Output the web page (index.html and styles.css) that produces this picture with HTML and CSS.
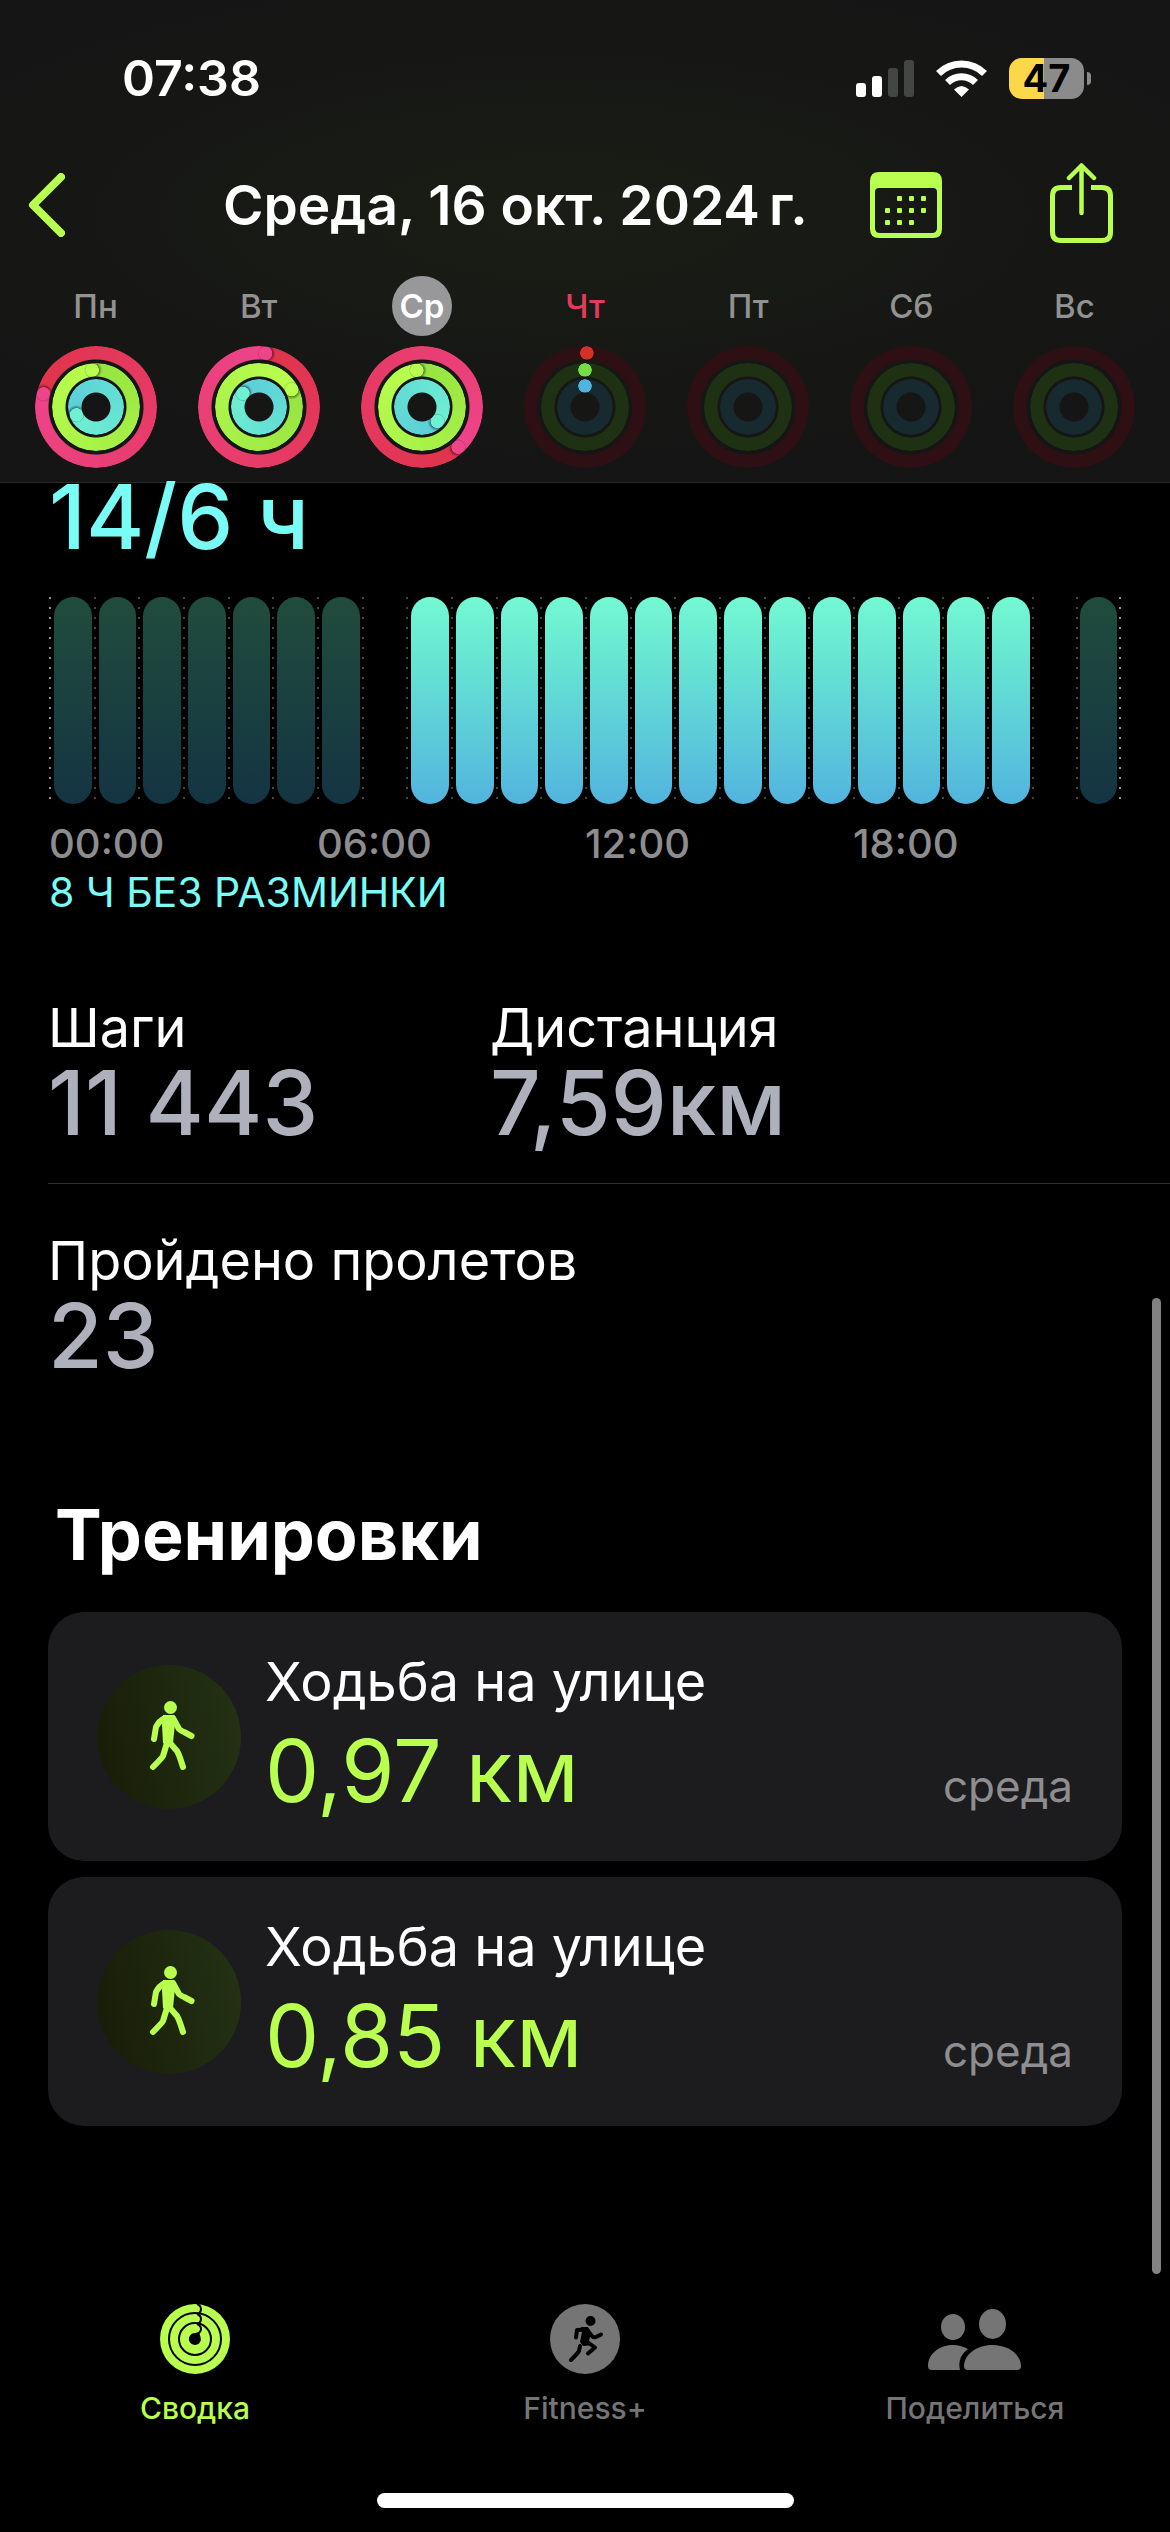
FILE: index.html
```
<!DOCTYPE html>
<html lang="ru">
<head>
    <meta charset="UTF-8">
    <meta name="viewport" content="width=device-width, initial-scale=1.0">
    <title>Фитнес</title>
    <link rel="stylesheet" href="styles.css">
</head>
<body>
<header class="header">
    <div class="status">
        <span class="time">07:38</span>
        <div class="status-icons">
            <svg width="58" height="37" viewBox="0 0 58 37">
                <rect x="0" y="23" width="10" height="14" rx="3" fill="#fff"/>
                <rect x="16" y="16" width="10" height="21" rx="3" fill="#fff"/>
                <rect x="32" y="8" width="10" height="29" rx="3" fill="#444644"/>
                <rect x="48" y="0" width="10" height="37" rx="3" fill="#444644"/>
            </svg>
            <svg width="51" height="37" viewBox="0 0 51 37">
                <path d="M2.5 13.5A32.5 32.5 0 0 1 48.5 13.5M11.5 22.5A20 20 0 0 1 39.5 22.5" fill="none" stroke="#fff" stroke-width="7"/>
                <path d="M25.5 37L18 29.500Q25.500 22.500 33 29.500Z" fill="#fff"/>
            </svg>
            <div class="battery"><span class="battery-level">47</span><i class="battery-nub"></i></div>
        </div>
    </div>

    <nav class="navbar">
        <button class="icon-btn" aria-label="Назад">
            <svg width="37" height="64" viewBox="0 0 37 64"><path d="M33 4L5 32L33 60" fill="none" stroke="#b8ff4f" stroke-width="8" stroke-linecap="round" stroke-linejoin="round"/></svg>
        </button>
        <h1 class="title">Среда, 16 окт. 2024&thinsp;г.</h1>
        <div class="actions">
            <button class="icon-btn" aria-label="Календарь">
                <svg width="72" height="66" viewBox="0 0 72 66" fill="#b8ff4f">
                    <path fill-rule="evenodd" d="M9 0H63Q72 0 72 9V57Q72 66 63 66H9Q0 66 0 57V9Q0 0 9 0ZM9 16Q5 16 5 20V56Q5 61 10 61H62Q67 61 67 56V20Q67 16 63 16Z"/>
                    <g>
                        <rect x="27" y="24" width="5" height="5" rx="1"/><rect x="39" y="24" width="5" height="5" rx="1"/><rect x="51" y="24" width="5" height="5" rx="1"/>
                        <rect x="15" y="36" width="5" height="5" rx="1"/><rect x="27" y="36" width="5" height="5" rx="1"/><rect x="39" y="36" width="5" height="5" rx="1"/><rect x="51" y="36" width="5" height="5" rx="1"/>
                        <rect x="15" y="48" width="5" height="5" rx="1"/><rect x="27" y="48" width="5" height="5" rx="1"/><rect x="39" y="48" width="5" height="5" rx="1"/>
                    </g>
                </svg>
            </button>
            <button class="icon-btn" aria-label="Поделиться днем">
                <svg width="63" height="84" viewBox="0 0 63 84" fill="none" stroke="#b8ff4f" stroke-width="5">
                    <path d="M22 24.500H11Q2.500 24.500 2.500 33V69Q2.500 77.500 11 77.500H52Q60.500 77.500 60.500 69V33Q60.500 24.500 52 24.500H41"/>
                    <path d="M31.500 50V3M19 15L31.500 2.500L44 15" stroke-width="4.500" stroke-linecap="round" stroke-linejoin="round"/>
                </svg>
            </button>
        </div>
    </nav>

    <div class="week">
        <button class="day">
            <span class="day-name">Пн</span>
            <span class="rings">
                <i class="ring move" style="--tip: 284deg"></i>
                <i class="ring exercise" style="--tip: 354deg"></i>
                <i class="ring stand" style="--tip: 248deg"></i>
            </span>
        </button>
        <button class="day">
            <span class="day-name">Вт</span>
            <span class="rings">
                <i class="ring move" style="--tip: 7deg"></i>
                <i class="ring exercise" style="--tip: 62deg"></i>
                <i class="ring stand" style="--tip: 310deg"></i>
            </span>
        </button>
        <button class="day selected">
            <span class="day-name">Ср</span>
            <span class="rings">
                <i class="ring move" style="--tip: 138deg"></i>
                <i class="ring exercise" style="--tip: 352deg"></i>
                <i class="ring stand" style="--tip: 133deg"></i>
            </span>
        </button>
        <button class="day today">
            <span class="day-name">Чт</span>
            <span class="rings empty">
                <i class="ring move" style="--tip: 2deg"></i>
                <i class="ring exercise" style="--tip: 0deg"></i>
                <i class="ring stand" style="--tip: 0deg"></i>
            </span>
        </button>
        <button class="day">
            <span class="day-name">Пт</span>
            <span class="rings empty"><i class="ring move"></i><i class="ring exercise"></i><i class="ring stand"></i></span>
        </button>
        <button class="day">
            <span class="day-name">Сб</span>
            <span class="rings empty"><i class="ring move"></i><i class="ring exercise"></i><i class="ring stand"></i></span>
        </button>
        <button class="day">
            <span class="day-name">Вс</span>
            <span class="rings empty"><i class="ring move"></i><i class="ring exercise"></i><i class="ring stand"></i></span>
        </button>
    </div>
</header>

<main class="content">
    <section class="warmup">
        <p class="value cyan">14/6 ч</p>
        <ul class="chart">
            <li class="hour"><i class="bar idle"></i></li>
            <li class="hour"><i class="bar idle"></i></li>
            <li class="hour"><i class="bar idle"></i></li>
            <li class="hour"><i class="bar idle"></i></li>
            <li class="hour"><i class="bar idle"></i></li>
            <li class="hour"><i class="bar idle"></i></li>
            <li class="hour"><i class="bar idle"></i></li>
            <li class="hour"></li>
            <li class="hour"><i class="bar"></i></li>
            <li class="hour"><i class="bar"></i></li>
            <li class="hour"><i class="bar"></i></li>
            <li class="hour"><i class="bar"></i></li>
            <li class="hour"><i class="bar"></i></li>
            <li class="hour"><i class="bar"></i></li>
            <li class="hour"><i class="bar"></i></li>
            <li class="hour"><i class="bar"></i></li>
            <li class="hour"><i class="bar"></i></li>
            <li class="hour"><i class="bar"></i></li>
            <li class="hour"><i class="bar"></i></li>
            <li class="hour"><i class="bar"></i></li>
            <li class="hour"><i class="bar"></i></li>
            <li class="hour"><i class="bar"></i></li>
            <li class="hour"></li>
            <li class="hour"><i class="bar idle"></i></li>
        </ul>
        <div class="axis">
            <span>00:00</span><span>06:00</span><span>12:00</span><span>18:00</span>
        </div>
        <p class="note">8 Ч БЕЗ РАЗМИНКИ</p>
    </section>

    <section class="stats">
        <div class="stats-row">
            <div class="stat">
                <p class="label">Шаги</p>
                <p class="value">11&nbsp;443</p>
            </div>
            <div class="stat">
                <p class="label">Дистанция</p>
                <p class="value">7,59км</p>
            </div>
        </div>
        <div class="stats-row">
            <div class="stat">
                <p class="label">Пройдено пролетов</p>
                <p class="value">23</p>
            </div>
        </div>
    </section>

    <section class="workouts">
        <h2 class="heading">Тренировки</h2>
        <a class="card" href="#">
            <svg class="walk" width="144" height="144" viewBox="0 0 144 144">
                <defs>
                    <linearGradient id="disc" x1="0" y1="0.600" x2="1" y2="0.400">
                        <stop offset="0" stop-color="#191d08"/>
                        <stop offset="1" stop-color="#233114"/>
                    </linearGradient>
                </defs>
                <circle cx="72" cy="72" r="72" fill="url(#disc)"/>
                <g id="walker" fill="none" stroke="#b8ff4f" stroke-width="6" stroke-linecap="round" stroke-linejoin="round">
                    <circle cx="73.500" cy="42.500" r="6.500" fill="#b8ff4f" stroke="none"/>
                    <path d="M66 50H76Q79 51 78 58L76 78Q71 82 66 78L65 60Z" fill="#b8ff4f" stroke="none"/>
                    <path d="M68 53Q62 56 59 62L57 74M76 53L82 64Q84 66 87 67L94.500 71"/>
                    <path d="M70 78L66 91Q65 93 56 102M73 78L80 86Q82 89 86 102"/>
                </g>
            </svg>
            <div class="card-body">
                <p class="label">Ходьба на улице</p>
                <div class="card-row">
                    <p class="value green">0,97 км</p>
                    <span class="weekday">среда</span>
                </div>
            </div>
        </a>
        <a class="card" href="#">
            <svg class="walk" width="144" height="144" viewBox="0 0 144 144">
                <circle cx="72" cy="72" r="72" fill="url(#disc)"/>
                <use href="#walker"/>
            </svg>
            <div class="card-body">
                <p class="label">Ходьба на улице</p>
                <div class="card-row">
                    <p class="value green">0,85 км</p>
                    <span class="weekday">среда</span>
                </div>
            </div>
        </a>
    </section>
</main>

<i class="scrollbar"></i>

<footer class="footer">
    <nav class="tabs">
        <a class="tab active" href="#">
            <svg width="70" height="70" viewBox="0 0 70 70">
                <circle cx="35" cy="35" r="35" fill="#b8ff4f"/>
                <g fill="none" stroke="#000" stroke-width="2">
                    <circle cx="35" cy="35" r="26"/>
                    <circle cx="35" cy="35" r="16"/>
                    <path d="M37 0Q41 1.500 41 5Q41 8 38.500 9.500M37 10Q41 11.500 41 15Q41 18 38.500 19.500M37 20Q41 21.500 41 25Q41 28 37 30"/>
                </g>
                <path d="M35 29Q38 29 40 27Q39 30 40.500 33A6 6 0 1 1 35 29Z" fill="#000"/>
            </svg>
            <span>Сводка</span>
        </a>
        <a class="tab" href="#">
            <svg width="70" height="70" viewBox="0 0 70 70">
                <circle cx="35" cy="35" r="35" fill="#757575"/>
                <circle cx="40.500" cy="17" r="5"/>
                <path d="M31 23H38L41 28L39 37L43 41L33 42L30 38L32 28Z"/>
                <g fill="none" stroke="#000" stroke-width="4" stroke-linecap="round" stroke-linejoin="round">
                    <path d="M36 25.500L27 26L26 33.500M38 27L42 32Q43.500 34 46 33L51 30.500"/>
                    <path d="M36 37L45 43.500L38 49.500M30 42L29 47Q28 49 21 56"/>
                </g>
            </svg>
            <span>Fitness+</span>
        </a>
        <a class="tab" href="#">
            <svg width="94" height="70" viewBox="0 -5 94 70" fill="#757575">
                <ellipse cx="25" cy="18" rx="12" ry="13"/>
                <ellipse cx="64.500" cy="15" rx="13.500" ry="15"/>
                <path d="M36 57C36 46 48 36 64.500 36S93 46 93 57Q93 61 89 61H40Q36 61 36 57Z"/>
                <path d="M0 57C0 46 10 36 25 36C31 36 36 38 40 40C33 45 30 52 32 61H4Q0 61 0 57Z"/>
            </svg>
            <span>Поделиться</span>
        </a>
    </nav>
    <i class="home-indicator"></i>
</footer>
</body>
</html>
```
FILE: styles.css
```
*{
  margin: 0;
  padding: 0;
  box-sizing: border-box;
}

body{
  min-height: 100vh;
  display: flex;
  flex-direction: column;
  position: relative;
  background-color: #000;
  color: #fff;
  font-family: Inter, "Noto Sans", sans-serif;
}

button{
  background: none;
  border: none;
  color: inherit;
  font-family: inherit;
}

a{
  color: inherit;
  text-decoration: none;
}

svg{
  display: block;
}

/* header */
.header{
  background-color: #151515;
  background-image: radial-gradient(ellipse 60% 50% at 48% 45%, #1a1d15, transparent);
  border-bottom: 1px solid #2b2b2b;
}

.status{
  height: 148px;
  padding: 8px 79px 0 122px;
  display: flex;
  justify-content: space-between;
  align-items: center;
}

.time{
  font-size: 50px;
  font-weight: 600;
}

.status-icons{
  display: flex;
  align-items: center;
  gap: 22px;
}

.battery{
  display: flex;
  align-items: center;
  gap: 3px;
}

.battery-level{
  width: 75px;
  height: 41px;
  border-radius: 13px;
  background: linear-gradient(90deg, #fbd84a 47%, #8b8b8b 47%);
  color: #000;
  font-size: 38px;
  font-weight: 700;
  line-height: 41px;
  text-align: center;
}

.battery-nub{
  width: 4px;
  height: 13px;
  border-radius: 0 4px 4px 0;
  background-color: #8b8b8b;
}

.navbar{
  height: 114px;
  padding: 0 57px 0 28px;
  display: flex;
  align-items: center;
}

.title{
  flex: 1;
  padding-left: 158px;
  font-size: 55px;
  font-weight: 600;
  white-space: nowrap;
}

.actions{
  display: flex;
  align-items: center;
  gap: 108px;
}

.week{
  padding: 14px;
  display: grid;
  grid-template-columns: repeat(7, 1fr);
}

.day{
  display: flex;
  flex-direction: column;
  align-items: center;
  gap: 10px;
}

.day-name{
  width: 60px;
  height: 60px;
  border-radius: 50%;
  color: #929292;
  font-size: 33px;
  font-weight: 500;
  line-height: 60px;
}

.selected .day-name{
  background-color: #98989b;
  color: #fff;
  font-weight: 600;
}

.today .day-name{
  color: #e63a5c;
}

.rings{
  width: 122px;
  height: 122px;
  display: grid;
  place-items: center;
}

.ring{
  grid-area: 1 / 1;
  border-radius: 50%;
  background: conic-gradient(from var(--tip), var(--start), var(--end));
  mask: radial-gradient(closest-side, transparent calc(100% - 14px), #000 calc(100% - 13px));
}

/* rounded end of the ring with its shadow */
.ring::after{
  content: "";
  display: block;
  height: 100%;
  transform: rotate(var(--tip));
  background:
    radial-gradient(circle 7px at 50% 7px, var(--end) 92%, transparent),
    radial-gradient(circle 9px at calc(50% + 1px) 7px, rgba(0, 0, 0, 0.5) 60%, transparent);
}

.move{
  --start: #e0334a;
  --end: #ee4489;
  width: 122px;
  height: 122px;
}

.exercise{
  --start: #96e441;
  --end: #baff4f;
  width: 88px;
  height: 88px;
}

.stand{
  --start: #5bcdd8;
  --end: #6ef0d2;
  width: 56px;
  height: 56px;
}

.empty .ring{
  background: var(--track);
}

.empty .ring::after{
  display: none;
}

.today .ring::after{
  display: block;
  background: radial-gradient(circle 7px at 50% 7px, var(--end) 92%, transparent);
}

.empty .move{
  --track: #2e1014;
  --end: #d63027;
}

.empty .exercise{
  --track: #1e3213;
  --end: #77dd44;
}

.empty .stand{
  --track: #172a30;
  --end: #4fb5df;
}

/* content */
.content{
  flex: 1;
}

.value{
  color: #aeb0bb;
  font-size: 89px;
  font-weight: 500;
  line-height: 84px;
}

.label{
  font-size: 54px;
  line-height: 66px;
}

.warmup{
  padding: 0 49px;
}

.cyan{
  color: #7afcf6;
  line-height: 68px;
}

.chart{
  height: 207px;
  margin-top: 46px;
  display: grid;
  grid-template-columns: repeat(24, 1fr);
  list-style: none;
}

.hour{
  padding: 0 2px 0 5px;
  background: repeating-linear-gradient(#444 0 2px, transparent 2px 10px) left / 2px 100% no-repeat;
}

.hour:first-child{
  background-image: repeating-linear-gradient(#909090 0 2px, transparent 2px 10px);
}

.hour:last-child{
  background:
    repeating-linear-gradient(#444 0 2px, transparent 2px 10px) left / 2px 100% no-repeat,
    repeating-linear-gradient(#909090 0 2px, transparent 2px 10px) right / 2px 100% no-repeat;
  padding: 0 4px;
}

.bar{
  display: block;
  height: 100%;
  border-radius: 19px;
  background: linear-gradient(#74f9d2, #67e5d3 30%, #52b4de);
}

.idle{
  background: linear-gradient(#204c3c, #1a403f 50%, #143443);
}

.axis{
  margin-top: 16px;
  display: grid;
  grid-template-columns: repeat(4, 1fr);
  color: #8d8d90;
  font-size: 40px;
  font-weight: 500;
  line-height: 48px;
}

.note{
  color: #7afcf6;
  font-size: 41px;
  line-height: 48px;
}

.stats{
  margin-top: 79px;
  padding-left: 48px;
}

.stats-row{
  padding-bottom: 38px;
  display: grid;
  grid-template-columns: 442px 1fr;
}

.stats-row + .stats-row{
  border-top: 1px solid #2e2e2e;
  padding-top: 44px;
}

.stats-row .label{
  white-space: nowrap;
}

.workouts{
  margin-top: 77px;
  padding: 0 48px;
}

.heading{
  padding-left: 7px;
  margin-bottom: 35px;
  font-size: 70px;
  font-weight: 700;
  line-height: 84px;
}

.card{
  margin-bottom: 16px;
  padding: 37px 49px 43px;
  display: flex;
  align-items: center;
  gap: 24px;
  border-radius: 36px;
  background-color: #1c1c1e;
}

.walk{
  margin-top: 6px;
}

.card-body{
  flex: 1;
}

.card-row{
  margin-top: 9px;
  display: flex;
  justify-content: space-between;
  align-items: baseline;
}

.green{
  color: #b8ff4f;
  font-size: 86px;
  font-weight: 400;
  line-height: 94px;
}

.weekday{
  color: #8e8e90;
  font-size: 44px;
}

/* lies over the content at the right edge */
.scrollbar{
  position: absolute;
  top: 1298px;
  right: 9px;
  width: 9px;
  height: 976px;
  border-radius: 5px;
  background-color: #828282;
}

/* bottom tabs */
.tabs{
  display: grid;
  grid-template-columns: repeat(3, 1fr);
}

.tab{
  display: flex;
  flex-direction: column;
  align-items: center;
  gap: 16px;
  color: #757575;
  font-size: 30px;
  font-weight: 500;
  line-height: 36px;
}

.active{
  color: #b8ff4f;
}

.home-indicator{
  display: block;
  width: 417px;
  height: 15px;
  margin: 67px auto 24px;
  border-radius: 8px;
  background-color: #fff;
}
```
